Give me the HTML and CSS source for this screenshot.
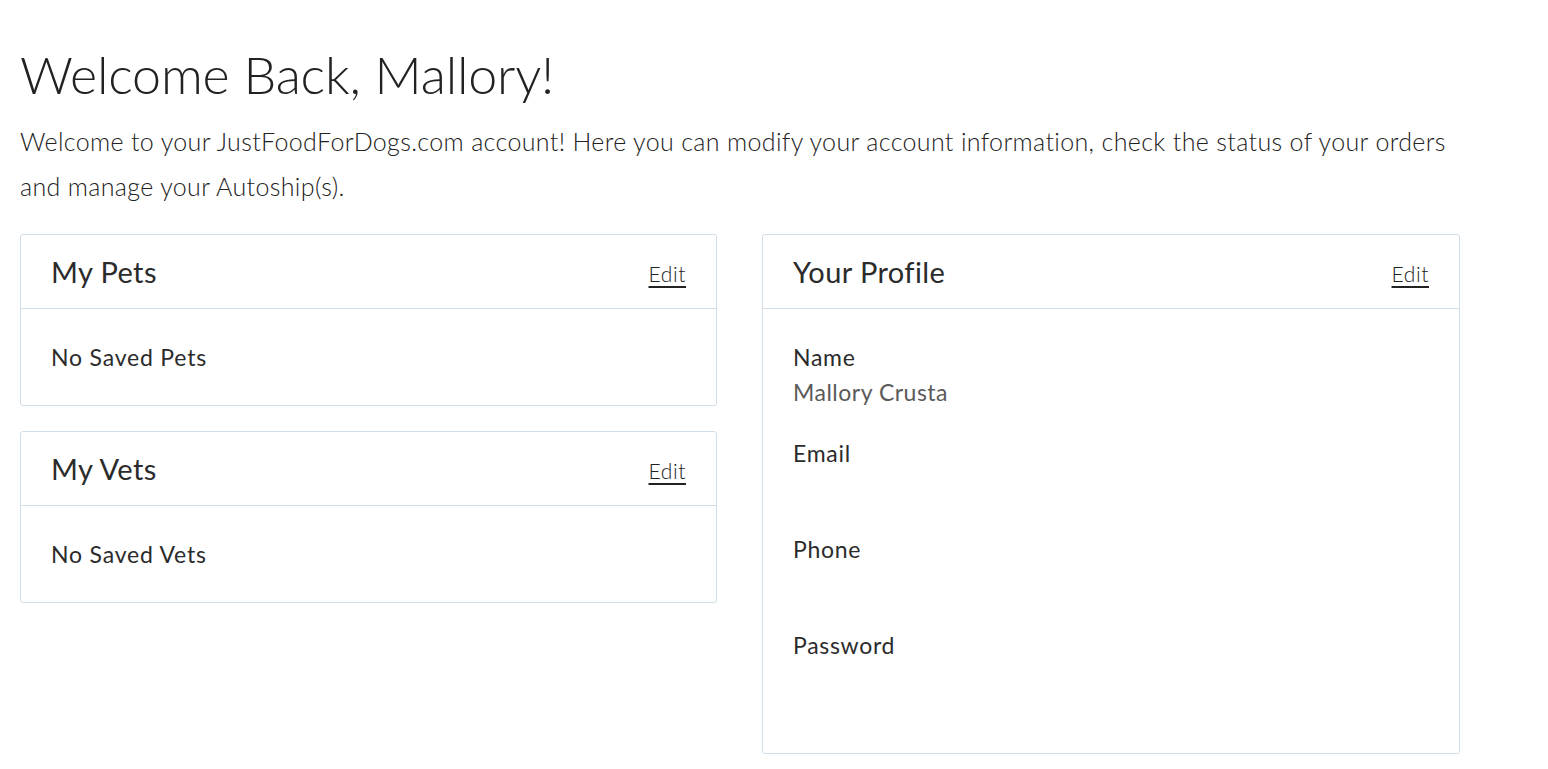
FILE: index.html
```html
<!DOCTYPE html>
<html lang="en">
<head>
<meta charset="utf-8">
<title>My Account</title>
<link rel="stylesheet" href="styles.css">
</head>
<body>
<main class="page">
  <h1 class="welcome-title">Welcome Back, Mallory!</h1>
  <p class="welcome-text">Welcome to your JustFoodForDogs.com account! Here you can modify your account information, check the status of your orders and manage your Autoship(s).</p>
  <div class="grid">
    <div class="column">
      <section class="card">
        <header class="card-header">
          <h2 class="card-title">My Pets</h2>
          <a class="edit-link" href="#">Edit</a>
        </header>
        <div class="card-body">
          <p class="empty">No Saved Pets</p>
        </div>
      </section>
      <section class="card">
        <header class="card-header">
          <h2 class="card-title">My Vets</h2>
          <a class="edit-link" href="#">Edit</a>
        </header>
        <div class="card-body">
          <p class="empty">No Saved Vets</p>
        </div>
      </section>
    </div>
    <div class="column">
      <section class="card">
        <header class="card-header">
          <h2 class="card-title">Your Profile</h2>
          <a class="edit-link" href="#">Edit</a>
        </header>
        <div class="card-body profile-body">
          <div class="field">
            <div class="field-label">Name</div>
            <div class="field-value">Mallory Crusta</div>
          </div>
          <div class="field">
            <div class="field-label">Email</div>
            <div class="field-value"></div>
          </div>
          <div class="field">
            <div class="field-label">Phone</div>
            <div class="field-value"></div>
          </div>
          <div class="field">
            <div class="field-label">Password</div>
            <div class="field-value"></div>
          </div>
        </div>
      </section>
    </div>
  </div>
</main>
</body>
</html>
```

FILE: styles.css
```css
* { box-sizing: border-box; }
body {
  margin: 0;
  background: #fff;
  color: #222;
  font-family: Lato, "Open Sans", sans-serif;
}
.page {
  width: 1480px;
  padding: 40px 20px 0 20px;
}
.welcome-title {
  margin: 0;
  font-size: 52px;
  font-weight: 300;
  line-height: 68px;
  letter-spacing: -0.2px;
  color: #222;
}
.welcome-text {
  margin: 11px 0 0 0;
  width: 1440px;
  font-size: 25px;
  font-weight: 300;
  line-height: 45px;
  letter-spacing: 0.35px;
  color: #222;
}
.grid {
  display: grid;
  grid-template-columns: 697px 698px;
  column-gap: 45px;
  margin-top: 25px;
  align-items: start;
}
.column {
  display: flex;
  flex-direction: column;
  gap: 25px;
}
.card {
  border: 1px solid #cfe0e8;
  border-radius: 3px;
}
.card-header {
  height: 74px;
  border-bottom: 1px solid #cfe0e8;
  display: flex;
  align-items: center;
  justify-content: space-between;
  padding: 0 30px 0 30px;
}
.card-title {
  margin: 0;
  font-size: 29px;
  font-weight: 400;
  letter-spacing: 0.4px;
  color: #2b2b2b;
}
.edit-link {
  font-size: 21px;
  font-weight: 300;
  letter-spacing: 0.6px;
  color: #222;
  text-decoration: underline;
  text-decoration-thickness: 2px;
  text-underline-offset: 4px;
  margin-top: 4px;
}
.card-body {
  padding: 30px 30px 30px 30px;
}
.empty {
  margin: 0;
  font-size: 23px;
  line-height: 36px;
  letter-spacing: 0.8px;
  color: #2b2b2b;
}
.profile-body {
  padding: 31px 30px 29px 30px;
}
.field {
  margin-bottom: 26px;
}
.field-label {
  font-size: 23px;
  line-height: 35px;
  letter-spacing: 0.7px;
  color: #2b2b2b;
}
.field-value {
  height: 35px;
  font-size: 23px;
  line-height: 35px;
  letter-spacing: 0.5px;
  color: #5a5a5a;
}
```
